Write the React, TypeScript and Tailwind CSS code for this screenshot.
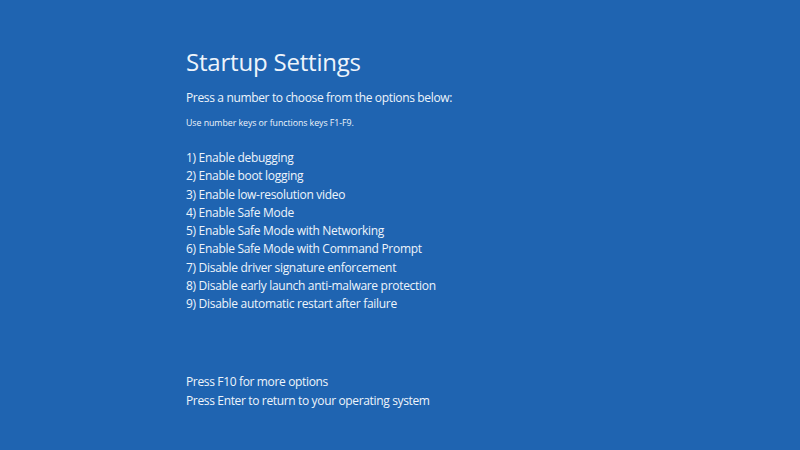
const OPTIONS = [
  "1) Enable debugging",
  "2) Enable boot logging",
  "3) Enable low-resolution video",
  "4) Enable Safe Mode",
  "5) Enable Safe Mode with Networking",
  "6) Enable Safe Mode with Command Prompt",
  "7) Disable driver signature enforcement",
  "8) Disable early launch anti-malware protection",
  "9) Disable automatic restart after failure",
];

export default function App() {
  return (
    <main className="flex h-[450px] w-[800px] flex-col bg-[#1f64b1] pl-[186px] pt-[47px] text-[#eef4fb] [font-family:'Open_Sans',sans-serif]">
      <h1 className="text-[24px] leading-[30px] font-normal tracking-[-0.2px]">Startup Settings</h1>
      <p className="mt-[12px] text-[12px] leading-[18px] tracking-[-0.35px]">
        Press a number to choose from the options below:
      </p>
      <p className="mt-[10px] text-[8.8px] leading-[12px] tracking-[-0.05px]">
        Use number keys or functions keys F1-F9.
      </p>
      <ul className="mt-[20px] text-[12px] leading-[18.25px] tracking-[-0.3px]">
        {OPTIONS.map((option) => (
          <li key={option}>{option}</li>
        ))}
      </ul>
      <div className="mt-[59px] text-[12px] leading-[19px] tracking-[-0.35px]">
        <p>Press F10 for more options</p>
        <p>Press Enter to return to your operating system</p>
      </div>
    </main>
  );
}
